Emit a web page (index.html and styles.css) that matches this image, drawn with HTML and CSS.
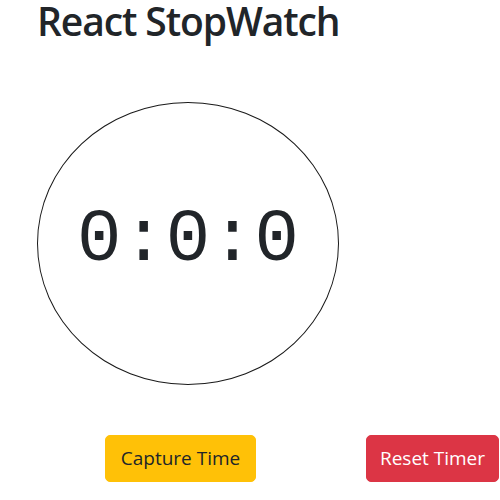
FILE: index.html
```html
<!DOCTYPE html>
<html lang="en">
<head>
<meta charset="utf-8">
<title>React StopWatch</title>
<link rel="stylesheet" href="styles.css">
</head>
<body>
<div class="page">
  <h1 class="title">React StopWatch</h1>
  <div class="dial">
    <span class="time">0:0:0</span>
  </div>
  <div class="actions">
    <button class="btn btn-capture" type="button">Capture Time</button>
    <button class="btn btn-reset" type="button">Reset Timer</button>
  </div>
</div>
</body>
</html>
```

FILE: styles.css
```css
html, body {
  margin: 0;
  padding: 0;
  background: #fff;
}
body {
  font-family: "Open Sans", "Noto Sans", sans-serif;
  color: #212529;
  overflow: hidden;
}
.page {
  padding: 0 0 0 37px;
}
.title {
  margin: 0;
  font-size: 39px;
  line-height: 42px;
  font-weight: 600;
  letter-spacing: -1.1px;
}
.dial {
  margin-top: 60px;
  width: 300px;
  height: 281px;
  border: 1px solid #1a1a1a;
  border-radius: 50%;
  display: flex;
  align-items: center;
  justify-content: center;
}
.time {
  font-family: "Liberation Mono", "DejaVu Sans Mono", monospace;
  font-size: 74px;
  line-height: 1;
  margin-top: -8px;
  color: #212529;
}
.actions {
  display: flex;
  gap: 110px;
  margin-top: 50px;
  padding-left: 68px;
}
.btn {
  font-family: "Open Sans", "Noto Sans", sans-serif;
  font-size: 19px;
  line-height: 29px;
  padding: 8px 0;
  border: 1px solid transparent;
  border-radius: 5px;
  white-space: nowrap;
  text-align: center;
}
.btn-capture {
  background: #ffc107;
  border-color: #ffc107;
  color: #212529;
  width: 151px;
}
.btn-reset {
  background: #dc3545;
  border-color: #dc3545;
  color: #fff;
  width: 133px;
}
```
